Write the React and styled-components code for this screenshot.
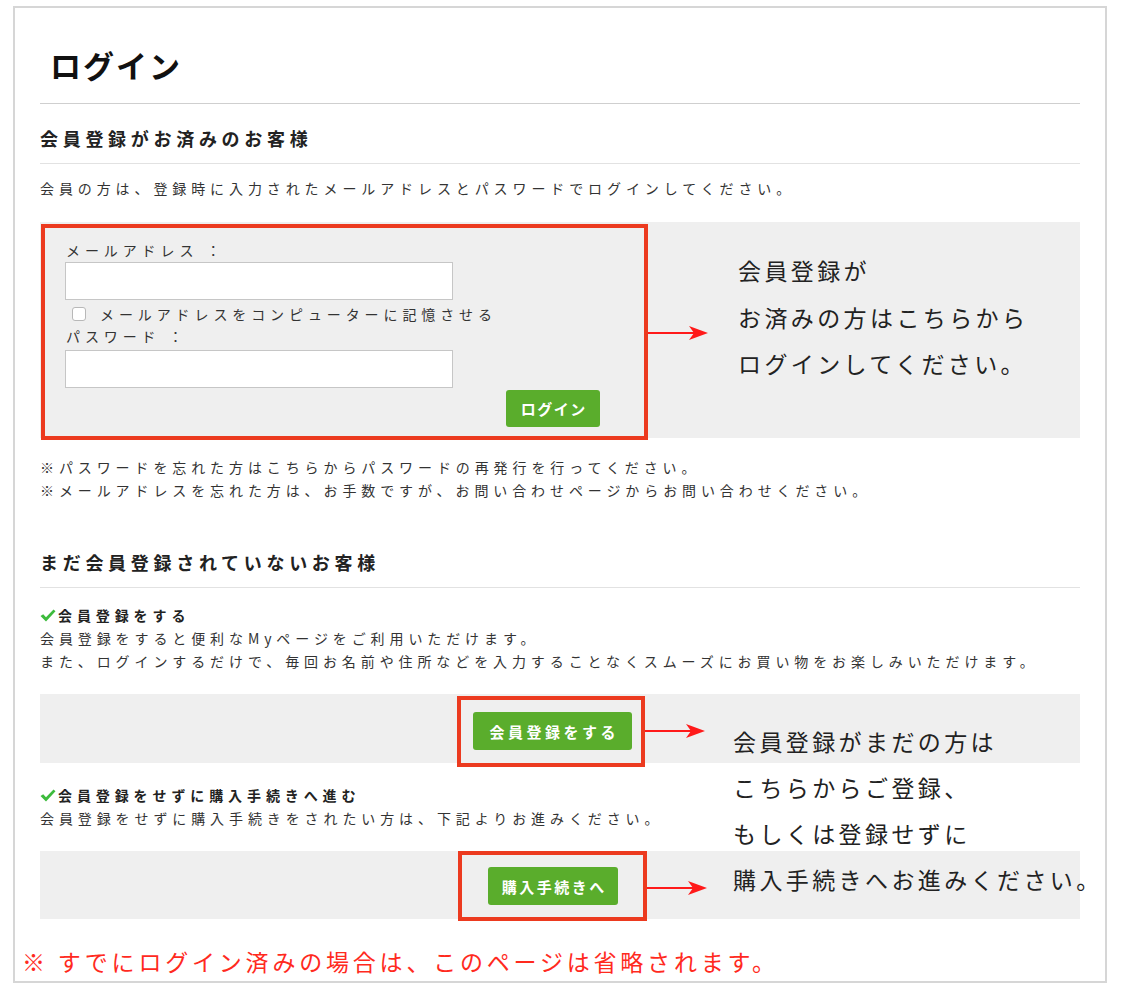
import React from 'react';
import styled, { createGlobalStyle } from 'styled-components';

const Global = createGlobalStyle`
  html, body { margin: 0; padding: 0; background: #fff; }
  body { font-family: "Noto Sans CJK JP", "Noto Sans", sans-serif; color: #333; }
  * { box-sizing: border-box; }
`;

const Frame = styled.div`
  margin: 6px 0 0 13px;
  width: 1094px;
  height: 977px;
  border: 2px solid #d6d6d6;
  padding: 37px 25px 0;
`;

const Title = styled.h1`
  margin: 0;
  padding: 0 0 18px 10px;
  font-size: 31px;
  line-height: 40px;
  font-weight: 700;
  letter-spacing: 2px;
  color: #111;
  border-bottom: 1px solid #cfcfcf;
`;

const SectionHeading = styled.h2`
  margin: ${(p) => p.$top}px 0 0;
  padding: 0 0 13px;
  font-size: 18px;
  line-height: 24px;
  font-weight: 700;
  letter-spacing: 4.7px;
  color: #222;
  border-bottom: 1px solid #e2e2e2;
`;

const Text = styled.p`
  margin: ${(p) => p.$top || 0}px 0 0;
  font-size: 14px;
  line-height: 23px;
  letter-spacing: 4.9px;
  color: #333;
  white-space: nowrap;
`;

const SubHeading = styled.h3`
  margin: ${(p) => p.$top}px 0 0;
  display: flex;
  align-items: center;
  font-size: 14px;
  line-height: 23px;
  font-weight: 700;
  letter-spacing: 4.9px;
  color: #222;
  svg { margin-right: 2px; flex: none; }
`;

const Panel = styled.div`
  margin-top: ${(p) => p.$top || 0}px;
  height: ${(p) => p.$h}px;
  background: #efefef;
  display: flex;
  align-items: flex-start;
  padding-left: ${(p) => p.$pl}px;
`;

const RedBox = styled.div`
  flex: none;
  margin-top: ${(p) => p.$mt || 0}px;
  width: ${(p) => p.$w}px;
  height: ${(p) => p.$h}px;
  border: 4px solid #ec3a1f;
  padding: ${(p) => p.$pad || '0'};
`;

const ArrowWrap = styled.div`
  flex: none;
  margin-top: ${(p) => p.$mt}px;
  width: 60px;
  height: 16px;
  display: flex;
`;

const Annotation = styled.div`
  font-size: 23px;
  line-height: 46.5px;
  letter-spacing: 3.4px;
  color: #222;
  white-space: nowrap;
`;

const SideAnnotation = styled(Annotation)`
  margin: 25px 0 0 30px;
`;

const FloatAnnotation = styled(Annotation)`
  position: absolute;
  left: 693px;
  top: 24px;
  line-height: 46px;
`;

const FormLabel = styled.div`
  margin-top: ${(p) => p.$top || 0}px;
  padding-left: 1px;
  font-size: 14px;
  line-height: 20px;
  letter-spacing: 4.9px;
  color: #333;
`;

const Input = styled.input`
  display: block;
  margin-top: ${(p) => p.$top}px;
  width: 388px;
  height: 38px;
  border: 1px solid #c6c6c6;
  background: #fff;
  padding: 0 6px;
  outline: none;
`;

const CheckRow = styled.label`
  margin-top: 4px;
  display: flex;
  align-items: center;
  height: 20px;
  font-size: 14px;
  letter-spacing: 4.9px;
  color: #333;
`;

const CheckBox = styled.span`
  width: 14px;
  height: 14px;
  margin: 0 14px 0 7px;
  border: 1px solid #b8b8b8;
  border-radius: 3px;
  background: #fff;
`;

const ButtonRow = styled.div`
  margin-top: 2px;
  display: flex;
  justify-content: flex-end;
  padding-right: 44px;
`;

const GreenButton = styled.button`
  margin: ${(p) => p.$m || 0};
  width: ${(p) => p.$w}px;
  height: ${(p) => p.$h}px;
  border: none;
  border-radius: 3px;
  background: #5aad2c;
  color: #fff;
  font-family: inherit;
  font-size: 15px;
  font-weight: 700;
  letter-spacing: ${(p) => p.$ls}px;
  padding: 0 0 0 ${(p) => p.$ls}px;
  white-space: nowrap;
`;

const RegisterFlow = styled.div`
  position: relative;
  margin-top: 21px;
`;

const RedNote = styled.p`
  margin: 27px 0 0 -18px;
  font-size: 23px;
  line-height: 30px;
  letter-spacing: 3.8px;
  color: #ff2a1e;
  white-space: nowrap;
`;

const Arrow = ({ mt }) => (
  <ArrowWrap $mt={mt}>
    <svg width="60" height="16" viewBox="0 0 60 16">
      <line x1="0" y1="8" x2="48" y2="8" stroke="#ff1a1a" strokeWidth="2" />
      <polygon points="41,1 60,8 41,15 46,8" fill="#ff1a1a" />
    </svg>
  </ArrowWrap>
);

const Check = () => (
  <svg width="16" height="13" viewBox="0 0 16 13">
    <path d="M0.5 7 L3.2 5.2 L6 8.3 L13.5 0.5 L15.5 2.2 L6 12.5 Z" fill="#3dbb3d" />
  </svg>
);

export default function App() {
  return (
    <>
      <Global />
      <Frame>
        <Title>ログイン</Title>

        <SectionHeading $top={22}>会員登録がお済みのお客様</SectionHeading>
        <Text $top={13}>会員の方は、登録時に入力されたメールアドレスとパスワードでログインしてください。</Text>

        <Panel $top={22} $h={216} $pl={1}>
          <RedBox $mt={2} $w={607} $h={216} $pad="12px 0 0 20px">
            <FormLabel>メールアドレス ：</FormLabel>
            <Input $top={2} type="text" />
            <CheckRow>
              <CheckBox />
              メールアドレスをコンピューターに記憶させる
            </CheckRow>
            <FormLabel $top={2}>パスワード ：</FormLabel>
            <Input $top={4} type="password" />
            <ButtonRow>
              <GreenButton $w={94} $h={37} $ls={1.5}>ログイン</GreenButton>
            </ButtonRow>
          </RedBox>
          <Arrow mt={103} />
          <SideAnnotation>
            会員登録が
            <br />
            お済みの方はこちらから
            <br />
            ログインしてください。
          </SideAnnotation>
        </Panel>

        <Text $top={18}>※パスワードを忘れた方はこちらからパスワードの再発行を行ってください。</Text>
        <Text>※メールアドレスを忘れた方は、お手数ですが、お問い合わせページからお問い合わせください。</Text>

        <SectionHeading $top={48}>まだ会員登録されていないお客様</SectionHeading>
        <SubHeading $top={16}>
          <Check />
          会員登録をする
        </SubHeading>
        <Text>会員登録をすると便利なMyページをご利用いただけます。</Text>
        <Text>また、ログインするだけで、毎回お名前や住所などを入力することなくスムーズにお買い物をお楽しみいただけます。</Text>

        <RegisterFlow>
          <Panel $h={69} $pl={417}>
            <RedBox $mt={2} $w={188} $h={71}>
              <GreenButton $m="12px 0 0 12px" $w={159} $h={38} $ls={3.5}>会員登録をする</GreenButton>
            </RedBox>
            <Arrow mt={29} />
          </Panel>

          <SubHeading $top={21}>
            <Check />
            会員登録をせずに購入手続きへ進む
          </SubHeading>
          <Text>会員登録をせずに購入手続きをされたい方は、下記よりお進みください。</Text>

          <Panel $top={21} $h={68} $pl={418}>
            <RedBox $w={189} $h={70}>
              <GreenButton $m="12px 0 0 26px" $w={130} $h={38} $ls={2.5}>購入手続きへ</GreenButton>
            </RedBox>
            <Arrow mt={29} />
          </Panel>

          <FloatAnnotation>
            会員登録がまだの方は
            <br />
            こちらからご登録、
            <br />
            もしくは登録せずに
            <br />
            購入手続きへお進みください。
          </FloatAnnotation>
        </RegisterFlow>

        <RedNote>※ すでにログイン済みの場合は、このページは省略されます。</RedNote>
      </Frame>
    </>
  );
}
